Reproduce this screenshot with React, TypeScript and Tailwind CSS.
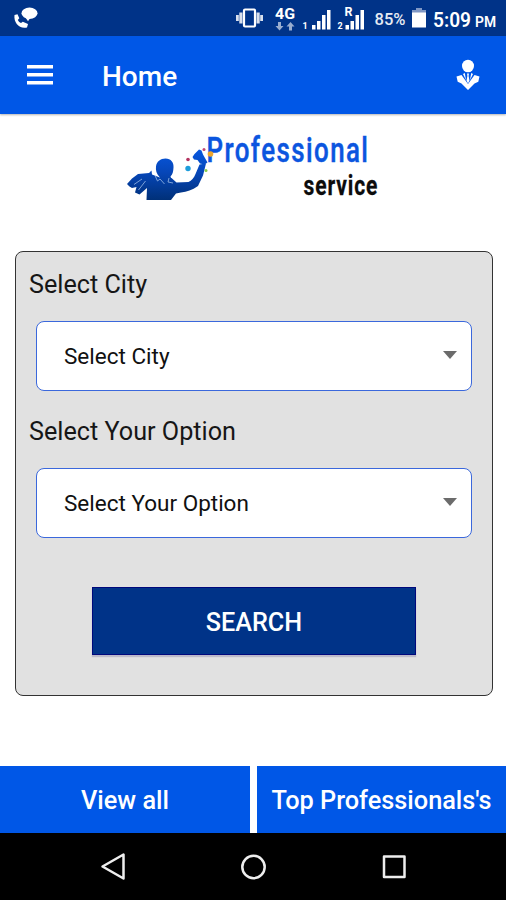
const StatusBar = () => (
  <div className="h-9 shrink-0 bg-[#003388]">
    <svg className="block" width="506" height="36" viewBox="0 0 506 36" fill="#fff" fontFamily="Roboto, sans-serif">
      {/* Call with speech bubble */}
      <path d="M14.500 15l3-.8 1.800 4-1.500 1.700c.8 1.500 1.800 2.500 3.200 3.100l1.800-1.300 5.200 2.300-1 3.400c-7.500 1.800-13.500-4.400-12.500-12.400z" />
      <ellipse cx="29.500" cy="13.300" rx="8" ry="5.700" />
      <path d="M25.500 17.500h5l-2.500 3.800z" />
      {/* Vibrate */}
      <rect x="244" y="9.500" width="11" height="17" rx="1" fill="none" stroke="#fff" strokeWidth="2.200" />
      <path d="M239.300 12.500h3.200v11h-3.200zM236 15h2.800v6H236zM256.500 12.500h3.200v11h-3.200zM260.200 15h2.800v6h-2.800z" opacity=".85" />
      {/* Network type */}
      <text x="275" y="18.500" fontSize="14.500" fontWeight="700" textLength="20" lengthAdjust="spacingAndGlyphs">4G</text>
      <path d="M278 22h3v4h2.500l-4 4.500-4-4.500h2.500zM289 30.500h3v-4h2.500l-4-4.500-4 4.500h2.500z" opacity=".6" />
      {/* Signals */}
      <text x="302.500" y="28.500" fontSize="9" fontWeight="700">1</text>
      <path d="M312 25h3.500v4.500H312zM317 21h3.500v8.500H317zM322 15h3.500v14.500H322zM327 10h3.500v19.500H327z" />
      <text x="337.500" y="28.500" fontSize="9" fontWeight="700">2</text>
      <text x="344.500" y="15.500" fontSize="12.500" fontWeight="700">R</text>
      <path d="M345.500 25h3.500v4.500h-3.500zM350.500 21h3.500v8.500h-3.500zM355.500 15h3.500v14.500h-3.500zM360.500 10h3.500v19.500h-3.500z" />
      <text x="374.500" y="25" fontSize="17" fontWeight="500" opacity=".9" textLength="31" lengthAdjust="spacingAndGlyphs">85%</text>
      {/* Battery */}
      <path d="M416 8.500h6v2h4v17h-14v-17h4z" />
      <path d="M416 8.500h6v2h4v2h-14v-2h4z" fill="#8097c4" />
      <text x="433" y="26.500" fontSize="20.500" fontWeight="600" textLength="38" lengthAdjust="spacingAndGlyphs">5:09</text>
      <text x="475" y="26.500" fontSize="14" fontWeight="600" textLength="21" lengthAdjust="spacingAndGlyphs">PM</text>
    </svg>
  </div>
);

const Header = () => (
  <header className="h-[78px] shrink-0 bg-[#0057e7] flex items-center pl-[27px] pr-[26px] pt-1 text-white shadow-[0_1px_2px_rgba(0,0,0,0.3)]">
    <svg className="-mt-1" width="26" height="20" viewBox="0 0 26 20" fill="currentColor">
      <path d="M0 0h26v3.500H0zM0 8h26v3.500H0zM0 16h26v3.500H0z" />
    </svg>
    <h1 className="ml-[49px] text-[28px] font-medium leading-none">Home</h1>
    <svg className="ml-auto -mt-1" width="24" height="32" viewBox="0 0 24 32" fill="currentColor">
      <ellipse cx="12" cy="7" rx="6" ry="6.300" />
      <path d="M.5 17.500L5.500 16 12 25l6.500-9 5 1.500-1.200 5.300-3.800 1.700L12 31l-6.500-6.500-3.800-1.700z" />
      <path d="M7 15l1.800-1 1.200 7zM17 15l-1.800-1-1.200 7zM11 14.500h2l-.4 2.500.9 4.500L12 24.500l-1.500-3 .9-4.500z" />
    </svg>
  </header>
);

const Logo = () => (
  <svg className="block mx-auto shrink-0" width="274" height="136" viewBox="116 114 274 136">
    <defs>
      <linearGradient id="body" gradientUnits="userSpaceOnUse" x1="0" y1="150" x2="0" y2="200">
        <stop offset="0" stopColor="#0757df" />
        <stop offset=".45" stopColor="#0646b8" />
        <stop offset="1" stopColor="#003078" />
      </linearGradient>
    </defs>
    <g fill="url(#body)">
      {/* Head */}
      <path d="M159.500 177c-3-3-4-7-3.500-10.500.5-5 4.500-8 9.500-8 5.500 0 8.500 4 8 9-.2 4-.8 7-3 9l1.500 4h-12z" />
      {/* Torso and arms */}
      <path d="M127 184l5-5.500 6-4.500 11-1 2.500-2.500.5 4 6.500 2.500 6 3 7-2 5 4.500 12-.5c3-1.500 5.500-4 7-8l4-9.500 6.500-1-3 12-5 10.500c-6 4-11 6-17 6.500l-5 1-5 6.500h-24.500l.5-12-7.500 6.500-4.500-2 1.500-5.500-4.500 1-2.500-1.500z" />
      {/* Hand and phone */}
      <path d="M192.500 157l2-3 4.500-4.500 2.500 1 1.500 4 4.500 8-3 2-4.500-1-2.500-3.500-3.500-.5z" />
    </g>
    <path d="M134 184.500l8-5.500M138.500 190l7-9M155 175.500l2.500 5.500 2.500-2 4.500 5M169 178l-1 4 5 1" fill="none" stroke="#9cbbe6" strokeWidth=".8" />
    <g fontFamily="Roboto, sans-serif">
      <text transform="translate(206.500 162) scale(.74 1)" fill="#0b55df" stroke="#0b55df" strokeWidth=".5" fontSize="35" fontWeight="500" letterSpacing="1.950">Professional</text>
      <text transform="translate(303.500 195) scale(.75 1)" fill="#0c0c0c" stroke="#0c0c0c" strokeWidth=".3" fontSize="28" fontWeight="700" letterSpacing="1.200">service</text>
    </g>
    <circle cx="210.500" cy="154" r="2.800" fill="#eda62d" />
    <circle cx="204" cy="149.500" r="1.500" fill="#c34672" />
    <circle cx="188" cy="159.500" r="1.800" fill="#b43360" />
    <circle cx="188" cy="168.500" r="2.700" fill="#1c9cdb" />
    <circle cx="206" cy="170.500" r="1.500" fill="#8acb47" />
  </svg>
);

const SelectField = ({ label }: { label: string }) => (
  <div>
    <div className="ml-[13px] h-[38px] text-[25.200px] leading-[38px] text-[#161616]">{label}</div>
    <button className="ml-5 mt-[17px] flex h-[70px] w-[436px] items-center justify-between rounded-lg border border-[#3b68dc] bg-white pl-[27px] pr-[14px] text-[22.500px] text-[#111]">
      <span className="mt-0.5">{label}</span>
      <svg className="-mt-0.5" width="14" height="8" viewBox="0 0 14 8" fill="#6b6b6b">
        <path d="M0 0h14L7 8z" />
      </svg>
    </button>
  </div>
);

const NavBar = () => (
  <nav className="h-[67px] shrink-0 bg-black">
    <svg className="block" width="506" height="67" viewBox="0 0 506 67" fill="none" stroke="#eee" strokeWidth="2.500" strokeLinejoin="round">
      <path d="M102.500 33.500L123.500 21.500v24z" />
      <circle cx="253.500" cy="34" r="11.200" />
      <rect x="384" y="23.500" width="20.500" height="20.500" />
    </svg>
  </nav>
);

export default function App() {
  return (
    <div className="flex h-[900px] w-[506px] flex-col overflow-hidden bg-white font-['Roboto',sans-serif]">
      <StatusBar />
      <Header />
      <Logo />

      {/* Search form */}
      <main className="ml-[15px] mt-px flex h-[445px] w-[478px] shrink-0 flex-col rounded-lg border border-[#333] bg-[#e1e1e1] pt-3.5">
        <SelectField label="Select City" />
        <div className="mt-[22px]">
          <SelectField label="Select Your Option" />
        </div>
        <button className="ml-[76px] mt-[49px] h-[68px] w-[324px] border border-[#00087c] bg-[#003388] pt-1 text-[25.200px] font-medium text-white shadow-[0_2px_1px_rgba(80,70,130,0.25)]">
          SEARCH
        </button>
      </main>

      <div className="mt-auto flex h-[67px] shrink-0 gap-[7px] text-[25.300px] font-medium text-white">
        <button className="w-[250px] bg-[#0057e7] pt-0.5">View all</button>
        <button className="flex-1 whitespace-nowrap bg-[#0057e7] pt-0.5">Top Professionals's</button>
      </div>
      <NavBar />
    </div>
  );
}
